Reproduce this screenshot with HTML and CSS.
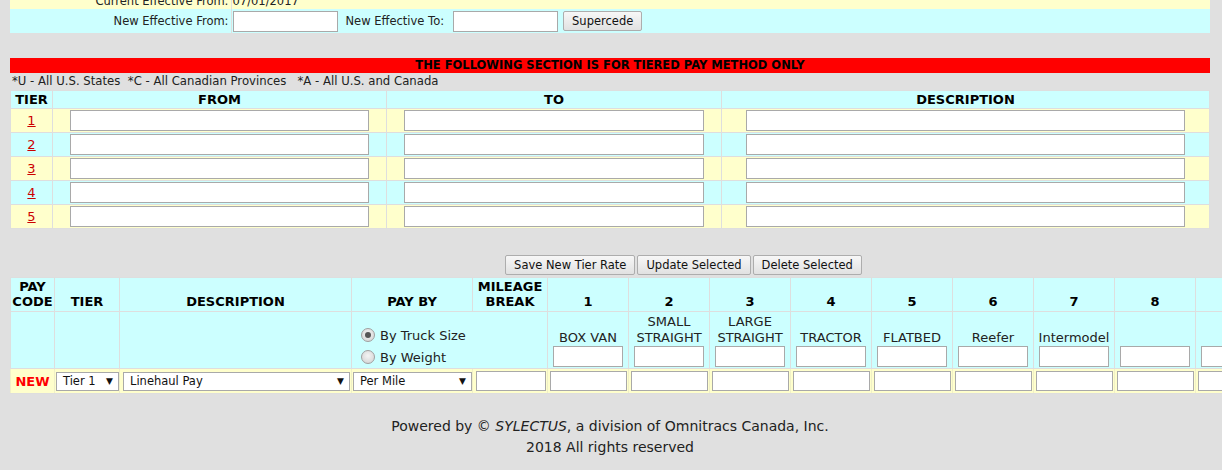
FILE: index.html
```html
<!DOCTYPE html>
<html>
<head>
<meta charset="utf-8">
<link rel="stylesheet" href="styles.css">
</head>
<body>
<div class="page">
  <table class="eff">
    <tr class="ry"><td class="lbl">Current Effective From:</td><td class="val">07/01/2017</td></tr>
    <tr class="rc"><td class="lbl">New Effective From:</td><td class="val"><div class="effrow"><input class="din" type="text"><span class="tolbl">New Effective To:</span><input class="din" type="text"><button class="btn sup">Supercede</button></div></td></tr>
  </table>

  <div class="banner">THE FOLLOWING SECTION IS FOR TIERED PAY METHOD ONLY</div>
  <div class="legend">*U - All U.S. States&nbsp; *C - All Canadian Provinces&nbsp;&nbsp; *A - All U.S. and Canada</div>

  <table class="tiers">
    <colgroup><col class="c-tier"><col class="c-from"><col class="c-to"><col></colgroup>
    <tr class="hd"><th>TIER</th><th>FROM</th><th>TO</th><th>DESCRIPTION</th></tr>
    <tr class="ry"><td class="num"><a href="#">1</a></td><td><input class="tf"></td><td><input class="tf"></td><td><input class="tf"></td></tr>
    <tr class="rc"><td class="num"><a href="#">2</a></td><td><input class="tf"></td><td><input class="tf"></td><td><input class="tf"></td></tr>
    <tr class="ry"><td class="num"><a href="#">3</a></td><td><input class="tf"></td><td><input class="tf"></td><td><input class="tf"></td></tr>
    <tr class="rc"><td class="num"><a href="#">4</a></td><td><input class="tf"></td><td><input class="tf"></td><td><input class="tf"></td></tr>
    <tr class="ry"><td class="num"><a href="#">5</a></td><td><input class="tf"></td><td><input class="tf"></td><td><input class="tf"></td></tr>
  </table>

  <div class="wide">
    <div class="actions">
      <button class="btn">Save New Tier Rate</button>
      <button class="btn">Update Selected</button>
      <button class="btn">Delete Selected</button>
    </div>

    <table class="rates">
      <colgroup>
        <col class="w-code"><col class="w-tier"><col class="w-desc"><col class="w-pay"><col class="w-mile">
        <col class="w-n"><col class="w-n"><col class="w-n"><col class="w-n"><col class="w-n">
        <col class="w-n"><col class="w-n"><col class="w-n"><col class="w-n"><col class="w-n">
      </colgroup>
      <tr class="h1">
        <th>PAY<br>CODE</th><th>TIER</th><th>DESCRIPTION</th><th>PAY BY</th><th>MILEAGE<br>BREAK</th>
        <th>1</th><th>2</th><th>3</th><th>4</th><th>5</th><th>6</th><th>7</th><th>8</th><th>9</th><th>10</th>
      </tr>
      <tr class="h2">
        <td></td><td></td><td></td>
        <td colspan="2" class="radios">
          <label class="rl"><span class="radio on"></span>By Truck Size</label>
          <label class="rl"><span class="radio"></span>By Weight</label>
        </td>
        <td><div class="sz">BOX VAN</div><input class="szin"></td>
        <td><div class="sz">SMALL<br>STRAIGHT</div><input class="szin"></td>
        <td><div class="sz">LARGE<br>STRAIGHT</div><input class="szin"></td>
        <td><div class="sz">TRACTOR</div><input class="szin"></td>
        <td><div class="sz">FLATBED</div><input class="szin"></td>
        <td><div class="sz">Reefer</div><input class="szin"></td>
        <td><div class="sz">Intermodel</div><input class="szin"></td>
        <td><div class="sz"></div><input class="szin"></td>
        <td><div class="sz"></div><input class="szin"></td>
        <td><div class="sz"></div><input class="szin"></td>
      </tr>
      <tr class="r3">
        <td class="new">NEW</td>
        <td><div class="sel s-tier"><span>Tier 1</span><span class="arr">▼</span></div></td>
        <td><div class="sel s-desc"><span>Linehaul Pay</span><span class="arr">▼</span></div></td>
        <td><div class="sel s-pay"><span>Per Mile</span><span class="arr">▼</span></div></td>
        <td><input class="mile"></td>
        <td><input class="rin"></td><td><input class="rin"></td><td><input class="rin"></td><td><input class="rin"></td><td><input class="rin"></td>
        <td><input class="rin"></td><td><input class="rin"></td><td><input class="rin"></td><td><input class="rin"></td><td><input class="rin"></td>
      </tr>
    </table>
  </div>

  <div class="footer">
    <div>Powered by © <i>SYLECTUS</i>, a division of Omnitracs Canada, Inc.</div>
    <div>2018 All rights reserved</div>
  </div>
</div>
</body>
</html>
```

FILE: styles.css
```css
* { box-sizing: border-box; }
html, body { margin: 0; padding: 0; background: #e0e0e0; overflow: hidden; }
body { font-family: "DejaVu Sans", Verdana, sans-serif; color: #000; }

.page { margin-left: 10px; width: 1200px; }

input { font-family: inherit; border: 1px solid #a9a9a9; background: #fff; margin: 0; padding: 0 2px; display: block; }

.btn {
  font-family: inherit; font-size: 11.5px; color: #111;
  height: 20px; padding: 0 8px; margin: 0;
  background: linear-gradient(#f7f7f7, #e1e1e1);
  border: 1px solid #adadad; border-radius: 2px;
}

/* effective dates */
.eff { width: 1200px; border-collapse: collapse; margin-top: -6px; font-size: 11.5px; color: #222; }
.eff td { padding: 0; }
.eff .ry td { background: #ffffcc; height: 15px; line-height: 13px; }
.eff .rc td { background: #ccffff; height: 24px; }
.eff .lbl { width: 221px; text-align: right; padding-right: 2px; border-right: 1px solid #e0e0e0; }
.eff .val { padding-left: 1px; }
.effrow { display: flex; align-items: center; }
.din { width: 105px; height: 21px; }
.tolbl { margin: 0 9px 0 8px; }
.sup { margin-left: 5px; }

/* banner */
.banner {
  margin-top: 25px; height: 15px; line-height: 15px;
  background: #ff0000; color: #000; font-size: 11.5px; font-weight: bold; text-align: center;
}
.legend { height: 17px; line-height: 17px; font-size: 11.7px; padding-left: 2px; color: #222; }

/* tiers */
.tiers { width: 1200px; border-collapse: collapse; table-layout: fixed; }
.tiers td, .tiers th { border: 1px solid #dedede; padding: 0; }
.c-tier { width: 42px; }
.c-from { width: 334px; }
.c-to { width: 335px; }
.tiers .hd th { background: #ccffff; height: 18px; font-size: 13px; line-height: 15px; }
.tiers .ry td { background: #ffffcc; height: 24px; }
.tiers .rc td { background: #ccffff; height: 24px; }
.tiers .num { text-align: center; font-size: 13px; }
.tiers .num a { color: #cc0000; }
.tf { width: 90%; height: 21px; margin: 0 auto; }

/* actions + rates */
.wide { width: 1347px; }
.actions { margin-top: 26px; display: flex; justify-content: center; gap: 2px; }
.rates { margin-top: 2px; width: 1347px; border-collapse: collapse; table-layout: fixed; }
.rates td, .rates th { border: 1px solid #dedede; padding: 0; }
.w-code { width: 44px; }
.w-tier { width: 65px; }
.w-desc { width: 232px; }
.w-pay { width: 121px; }
.w-mile { width: 75px; }
.w-n { width: 81px; }

.rates .h1 th {
  background: #ccffff; height: 34px; font-size: 13px; line-height: 15px;
  vertical-align: bottom; padding-bottom: 2px;
}
.rates .h2 td { background: #ccffff; height: 57px; vertical-align: bottom; padding-bottom: 1px; }
.sz { font-size: 13px; line-height: 16px; text-align: center; color: #222; padding-bottom: 0; }
.szin { width: 70px; height: 21px; margin: 0 auto; }

.radios { padding-left: 9px !important; padding-bottom: 0 !important; }
.rl { display: flex; align-items: center; height: 22px; font-size: 13px; color: #222; }
.radio {
  width: 14px; height: 14px; border-radius: 50%; margin-right: 5px;
  border: 1px solid #a0a0a0;
  background: radial-gradient(circle at 50% 40%, #f4f4f4, #d0d0d0);
  position: relative; display: inline-block;
}
.radio.on::after {
  content: ""; position: absolute; left: 3px; top: 3px; width: 6px; height: 6px;
  border-radius: 50%; background: #555;
}

.rates .r3 td { background: #ffffcc; height: 25px; border-color: #f0f0c8 #f0f0c8 #dedede; }
.new { text-align: center; color: #ff0000; font-weight: bold; font-size: 13px; }
.sel {
  height: 19px; background: #fff; border: 1px solid #a9a9a9;
  display: flex; align-items: center; justify-content: space-between;
  font-size: 11.5px; padding: 0 5px 0 6px; color: #111;
}
.sel .arr { font-size: 9px; }
.s-tier { width: 63px; margin-left: 1px; }
.s-desc { width: 227px; margin-left: 3px; }
.s-pay { width: 119px; margin-left: 1px; }
.mile { width: 70px; height: 20px; margin-left: 3px; }
.rin { width: 77px; height: 20px; margin-left: 2px; }

.footer { margin-top: 22px; text-align: center; font-size: 14px; line-height: 21px; color: #222; }
```
